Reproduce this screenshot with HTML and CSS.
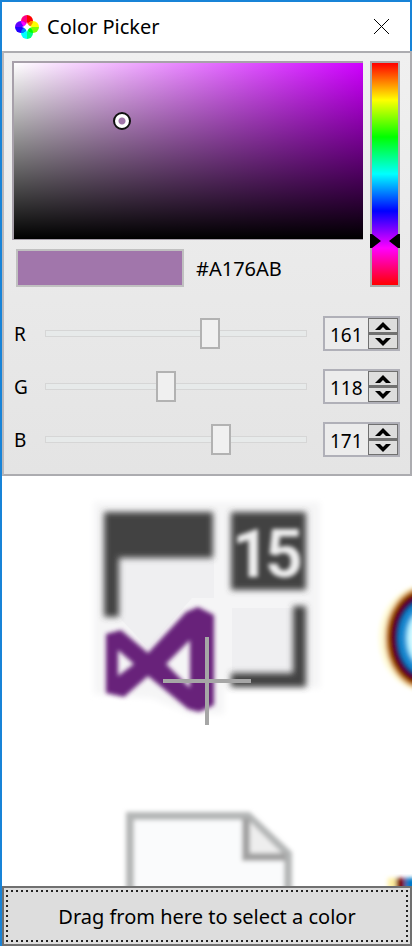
FILE: index.html
```html
<!DOCTYPE html>
<html lang="en">
<head>
<meta charset="utf-8">
<meta name="viewport" content="width=device-width, initial-scale=1">
<title>Color Picker</title>
<link rel="stylesheet" href="styles.css">
</head>
<body>
<main class="window">
  <header class="titlebar">
    <svg class="logo" viewBox="0 0 26 26" aria-hidden="true">
      <path fill="#ff0080" d="M13 1A6 6 0 0 0 13 13Z"/>
      <path fill="#ff0000" d="M13 1A6 6 0 0 1 13 13Z"/>
      <path fill="#ffff00" d="M25 13A6 6 0 0 0 13 13Z"/>
      <path fill="#80ff00" d="M25 13A6 6 0 0 1 13 13Z"/>
      <path fill="#00ff80" d="M13 25A6 6 0 0 0 13 13Z"/>
      <path fill="#00ffff" d="M13 25A6 6 0 0 1 13 13Z"/>
      <path fill="#2000ff" d="M1 13A6 6 0 0 0 13 13Z"/>
      <path fill="#6000ff" d="M1 13A6 6 0 0 1 13 13Z"/>
      <path fill="#ff8000" d="M13 13A6 6 0 0 0 19 7A6 6 0 0 0 13 13Z"/>
      <path fill="#00ff00" d="M13 13A6 6 0 0 0 19 19A6 6 0 0 0 13 13Z"/>
      <path fill="#0080ff" d="M13 13A6 6 0 0 0 7 19A6 6 0 0 0 13 13Z"/>
      <path fill="#ff00ff" d="M13 13A6 6 0 0 0 7 7A6 6 0 0 0 13 13Z"/>
      <path fill="#fff" d="M13 8Q14 12 18 13Q14 14 13 18Q12 14 8 13Q12 12 13 8Z"/>
    </svg>
    <h1 class="title">Color Picker</h1>
    <button class="close" type="button" aria-label="Close">
      <svg class="close-icon" viewBox="0 0 15 15" aria-hidden="true"><path d="M0 0L15 15M15 0L0 15"/></svg>
    </button>
  </header>

  <section class="panel">
    <div class="picker">
      <div class="shade"><span class="shade-marker"></span></div>
      <div class="hue">
        <svg class="hue-marker" viewBox="0 0 30 14" aria-hidden="true"><path d="M0 0H2L11 7L2 14H0ZM30 0H28L19 7L28 14H30Z"/></svg>
      </div>
      <div class="result">
        <span class="swatch"></span>
        <output class="hex">#A176AB</output>
      </div>
    </div>

    <div class="channels">
      <div class="channel">
        <label for="r">R</label>
        <input class="slider" id="r" type="range" min="0" max="255" value="161">
        <div class="spin">
          <input class="value" type="text" value="161" aria-label="R value">
          <div class="steps">
            <button class="step" type="button" aria-label="Increase R"><svg viewBox="0 0 16 8"><path d="M8 0L16 8H11L8 5L5 8H0Z"/></svg></button>
            <button class="step" type="button" aria-label="Decrease R"><svg viewBox="0 0 16 8"><path d="M8 8L16 0H11L8 3L5 0H0Z"/></svg></button>
          </div>
        </div>
      </div>
      <div class="channel">
        <label for="g">G</label>
        <input class="slider" id="g" type="range" min="0" max="255" value="118">
        <div class="spin">
          <input class="value" type="text" value="118" aria-label="G value">
          <div class="steps">
            <button class="step" type="button" aria-label="Increase G"><svg viewBox="0 0 16 8"><path d="M8 0L16 8H11L8 5L5 8H0Z"/></svg></button>
            <button class="step" type="button" aria-label="Decrease G"><svg viewBox="0 0 16 8"><path d="M8 8L16 0H11L8 3L5 0H0Z"/></svg></button>
          </div>
        </div>
      </div>
      <div class="channel">
        <label for="b">B</label>
        <input class="slider" id="b" type="range" min="0" max="255" value="171">
        <div class="spin">
          <input class="value" type="text" value="171" aria-label="B value">
          <div class="steps">
            <button class="step" type="button" aria-label="Increase B"><svg viewBox="0 0 16 8"><path d="M8 0L16 8H11L8 5L5 8H0Z"/></svg></button>
            <button class="step" type="button" aria-label="Decrease B"><svg viewBox="0 0 16 8"><path d="M8 8L16 0H11L8 3L5 0H0Z"/></svg></button>
          </div>
        </div>
      </div>
    </div>
  </section>

  <section class="preview">
    <svg class="magnified" viewBox="0 0 410 410" preserveAspectRatio="xMidYMid slice" aria-hidden="true">
      <defs>
        <filter id="soft" x="-20%" y="-20%" width="140%" height="140%"><feGaussianBlur stdDeviation="3"/></filter>
        <filter id="soft2" x="-20%" y="-20%" width="140%" height="140%"><feGaussianBlur stdDeviation="2"/></filter>
      </defs>
      <!-- calendar icon -->
      <path filter="url(#soft)" fill="#f5f5f6" d="M92 26H318V212H222V238H188L150 222L92 218Z"/>
      <path fill="#efeff1" d="M116 82H212V122H190L146 172L116 140Z"/>
      <path fill="#efeff1" d="M230 132H290V196H230Z"/>
      <g filter="url(#soft)" fill="#424242">
        <path d="M102 36H211V82H117V141H102Z"/>
        <path d="M229 36H304V114H229Z"/>
        <path d="M291 130H304V211H229V197H291Z"/>
      </g>
      <text class="day" filter="url(#soft2)" x="230 263" y="101">15</text>
      <path filter="url(#soft2)" fill="#68217a" fill-rule="evenodd" d="M104 158L119 154L146 177L184 136L196 131L212 139V229L197 236L186 233L146 200L122 221L104 217ZM116 174V200L132 188ZM164 188L188 212V164Z"/>
      <!-- document icon -->
      <g filter="url(#soft2)">
        <path fill="#fafbfc" stroke="#b4b6b6" stroke-width="8" d="M128 430V340H246L286 378V430"/>
        <path fill="#eee" stroke="#a2a2a2" stroke-width="8" d="M244 342V381H284"/>
      </g>
      <!-- fringed text at the right edge -->
      <g filter="url(#soft2)" fill="none">
        <ellipse cx="422" cy="162" rx="42" ry="50" stroke="#fffbd8" stroke-width="6"/>
        <ellipse cx="422" cy="162" rx="36" ry="48" stroke="#d08818" stroke-width="6"/>
        <ellipse cx="422" cy="162" rx="32" ry="44" stroke="#700000" stroke-width="7"/>
        <ellipse cx="422" cy="162" rx="26" ry="38" stroke="#000060" stroke-width="7"/>
        <ellipse cx="422" cy="162" rx="22" ry="33" stroke="#1688d0" stroke-width="8" fill="#90e4ff"/>
        <ellipse cx="422" cy="162" rx="15" ry="26" fill="#d8fbff"/>
      </g>
      <g filter="url(#soft2)">
        <path fill="#fff0a0" d="M386 402H396V420H386Z"/>
        <path fill="#800000" d="M394 402H403V420H394Z"/>
        <path fill="#0078c8" d="M403 402H420V420H403Z"/>
      </g>
    </svg>
    <span class="crosshair"></span>
  </section>

  <button class="drag" type="button"><span class="drag-focus">Drag from here to select a color</span></button>
</main>
</body>
</html>
```
FILE: styles.css
```css
* { box-sizing: border-box; }

body {
  margin: 0;
  background: #fff;
  color: #000;
  font: 20px/24px "Noto Sans", "Open Sans", sans-serif;
}

button, input { font: inherit; color: inherit; margin: 0; padding: 0; border-radius: 0; }

.window {
  display: flex;
  flex-direction: column;
  min-height: 100vh;
  border-left: 2px solid #1883d7;
}

.titlebar {
  display: flex;
  align-items: center;
  height: 51px;
  padding: 0 21px 0 12px;
  border-top: 2px solid #1883d7;
  border-right: 2px solid #1883d7;
}
.logo { width: 26px; height: 26px; }
.title { flex: 1; margin: 0 0 0 7px; font-size: 20px; font-weight: 400; }
.close { display: flex; border: 0; background: none; }
.close-icon { width: 15px; height: 15px; fill: none; stroke: #000; }

.panel {
  padding: 8px 10px 17px;
  border: 2px solid #acacb0;
  border-left-color: #b8b8bc;
  background: linear-gradient(#f0f0f0, #e4e4e4);
}

.picker {
  display: grid;
  grid-template-columns: 1fr 30px;
  grid-template-rows: 179px 38px;
  gap: 9px 7px;
  margin-left: -2px;
}
.shade {
  position: relative;
  border: solid #a7a0aa;
  border-width: 2px 0 1px 2px;
  background: linear-gradient(to top, #000, transparent), linear-gradient(to right, #fff, #cf00ff);
}
.shade-marker {
  position: absolute;
  left: 31%;
  top: 33%;
  width: 18px;
  height: 18px;
  margin: -9px;
  border: 2px solid #111;
  border-radius: 50%;
  background: radial-gradient(circle, #a176ab 3px, #fff 4px);
}
.hue {
  position: relative;
  grid-row: span 2;
  border: 2px solid #aaa;
  background: linear-gradient(#f00, #ff0, #0f0, #0ff, #00f, #f0f, #f00);
}
.hue-marker { position: absolute; left: -2px; top: 171px; width: 30px; height: 14px; }
.result { display: flex; align-items: center; gap: 12px; padding-left: 4px; }
.swatch { width: 168px; height: 38px; border: 2px solid #c0c0c0; background: #a176ab; }
.hex { padding-top: 2px; }

.channels { display: grid; gap: 18px; margin-top: 29px; }
.channel {
  display: grid;
  grid-template-columns: 15px 1fr 77px;
  gap: 6px;
  align-items: center;
  font-size: 19px;
}

.slider {
  appearance: none;
  width: 100%;
  height: 31px;
  background:
    linear-gradient(#e7eaea, #e7eaea) center / calc(100% - 22px) 5px no-repeat,
    linear-gradient(#d6d6d6, #d6d6d6) center / calc(100% - 20px) 7px no-repeat;
}
.slider::-webkit-slider-thumb {
  appearance: none;
  width: 20px;
  height: 31px;
  border: 2px solid #b2b2b2;
  background: #f0f0f0;
}

.spin { display: flex; height: 35px; border: 2px solid #b0b0b8; }
.value { flex: 1; width: 0; border: 0; padding: 2px 0 0 5px; background: #ececec; }
.steps { display: flex; flex-direction: column; gap: 1px; width: 30px; background: #707070; }
.step {
  display: flex;
  flex: 1;
  align-items: center;
  justify-content: center;
  border: 1px solid #707070;
  background: #ddd;
}
.step svg { width: 16px; height: 8px; }

.preview { position: relative; flex: 1; min-height: 200px; overflow: hidden; background: #fff; }
.magnified { position: absolute; width: 100%; height: 100%; }
.day { font: bold 66px Roboto, sans-serif; fill: #eee; }
.crosshair {
  position: absolute;
  left: 50%;
  top: 50%;
  width: 88px;
  height: 88px;
  margin: -44px;
  background:
    linear-gradient(#a6a6a6, #a6a6a6) center / 88px 4px no-repeat,
    linear-gradient(#a6a6a6, #a6a6a6) center / 4px 88px no-repeat;
}

.drag {
  display: flex;
  height: 60px;
  padding: 2px;
  border: 2px solid #707070;
  background: #ddd;
}
.drag-focus {
  display: flex;
  flex: 1;
  align-self: stretch;
  align-items: center;
  justify-content: center;
  padding-top: 2px;
  background:
    repeating-linear-gradient(to right, #222 0 2px, transparent 2px 5px) top / 100% 2px no-repeat,
    repeating-linear-gradient(to right, #222 0 2px, transparent 2px 5px) bottom / 100% 2px no-repeat,
    repeating-linear-gradient(#222 0 2px, transparent 2px 5px) left / 2px 100% no-repeat,
    repeating-linear-gradient(#222 0 2px, transparent 2px 5px) right / 2px 100% no-repeat;
}
```
